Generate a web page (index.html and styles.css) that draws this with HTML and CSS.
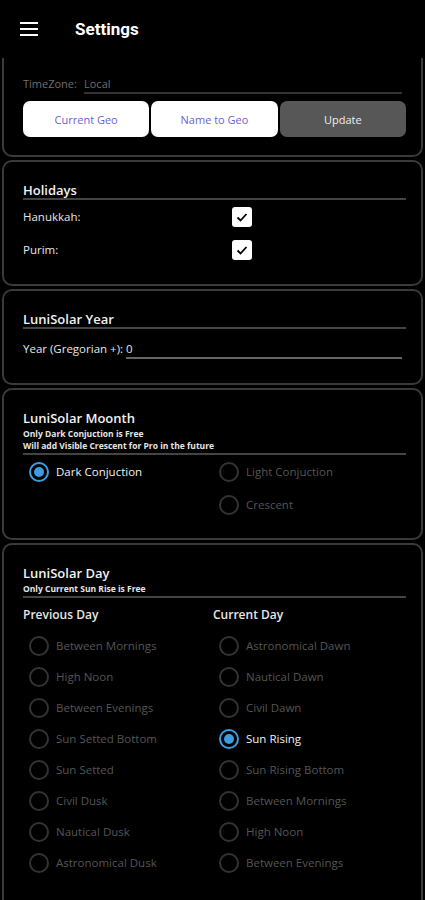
FILE: index.html
```html
<!DOCTYPE html>
<html lang="en">
<head>
    <meta charset="UTF-8" />
    <meta name="viewport" content="width=device-width, initial-scale=1.0"/>
    <title>Settings</title>
    <link rel="stylesheet" href="styles.css">
</head>
<body>
    <div class="app">
        <div class="topbar">
            <div class="burger"><span></span><span></span><span></span></div>
            <h1>Settings</h1>
        </div>

        <div class="cards">
            <!-- location card, top is scrolled under the bar -->
            <div class="card geo">
                <div class="tz-row">
                    <span class="tz-label">TimeZone:</span>
                    <span class="tz-value">Local</span>
                </div>
                <div class="geo-buttons">
                    <button class="btn light">Current Geo</button>
                    <button class="btn light">Name to Geo</button>
                    <button class="btn dark">Update</button>
                </div>
            </div>

            <div class="card holidays">
                <h2>Holidays</h2>
                <div class="check-row">
                    <span>Hanukkah:</span>
                    <span class="checkbox"><svg viewBox="0 0 20 20"><path d="M5.5 10.5l3 3 6-6.5" /></svg></span>
                </div>
                <div class="check-row">
                    <span>Purim:</span>
                    <span class="checkbox"><svg viewBox="0 0 20 20"><path d="M5.5 10.5l3 3 6-6.5" /></svg></span>
                </div>
            </div>

            <div class="card year">
                <h2>LuniSolar Year</h2>
                <div class="year-row">
                    <span>Year (Gregorian +):</span>
                    <span class="year-input">0</span>
                </div>
            </div>

            <div class="card month">
                <div class="head">
                    <h2 class="plain">LuniSolar Moonth</h2>
                    <p class="note">Only Dark Conjuction is Free</p>
                    <p class="note">Will add Visible Crescent for Pro in the future</p>
                </div>
                <div class="radio-grid">
                    <div class="radio-col">
                        <div class="radio on"><i></i>Dark Conjuction</div>
                    </div>
                    <div class="radio-col">
                        <div class="radio"><i></i>Light Conjuction</div>
                        <div class="radio"><i></i>Crescent</div>
                    </div>
                </div>
            </div>

            <div class="card day">
                <div class="head">
                    <h2 class="plain">LuniSolar Day</h2>
                    <p class="note">Only Current Sun Rise is Free</p>
                </div>
                <div class="radio-grid">
                    <div class="radio-col">
                        <div class="col-title">Previous Day</div>
                        <div class="radio"><i></i>Between Mornings</div>
                        <div class="radio"><i></i>High Noon</div>
                        <div class="radio"><i></i>Between Evenings</div>
                        <div class="radio"><i></i>Sun Setted Bottom</div>
                        <div class="radio"><i></i>Sun Setted</div>
                        <div class="radio"><i></i>Civil Dusk</div>
                        <div class="radio"><i></i>Nautical Dusk</div>
                        <div class="radio"><i></i>Astronomical Dusk</div>
                    </div>
                    <div class="radio-col">
                        <div class="col-title">Current Day</div>
                        <div class="radio"><i></i>Astronomical Dawn</div>
                        <div class="radio"><i></i>Nautical Dawn</div>
                        <div class="radio"><i></i>Civil Dawn</div>
                        <div class="radio on"><i></i>Sun Rising</div>
                        <div class="radio"><i></i>Sun Rising Bottom</div>
                        <div class="radio"><i></i>Between Mornings</div>
                        <div class="radio"><i></i>High Noon</div>
                        <div class="radio"><i></i>Between Evenings</div>
                    </div>
                </div>
            </div>
        </div>
    </div>
</body>
</html>
```

FILE: styles.css
```css
* {
    margin: 0;
    padding: 0;
    box-sizing: border-box;
}

body {
    background: #000;
    color: #e6e6e6;
    font-family: "Open Sans", "DejaVu Sans", sans-serif;
    font-size: 11.5px;
    height: 900px;
    overflow: hidden;
}

.topbar {
    height: 58px;
    display: flex;
    align-items: center;
    padding-left: 20px;
}

.burger {
    width: 18px;
    display: flex;
    flex-direction: column;
    gap: 4px;
    margin-right: 37px;
}

.burger span {
    display: block;
    height: 2px;
    background: #fff;
}

.topbar h1 {
    font-family: Roboto, "Liberation Sans", sans-serif;
    font-size: 17px;
    font-weight: 700;
    color: #fff;
}

.cards {
    display: flex;
    flex-direction: column;
    gap: 3px;
    padding: 0 2px;
}

.card {
    border: 2px solid #3a3a3a;
    border-radius: 10px;
    padding: 20px 15px 0 19px;
}

.card.geo {
    border-top: none;
    border-top-left-radius: 0;
    border-top-right-radius: 0;
    padding-top: 18px;
    height: 99px;
}

.tz-row {
    display: flex;
    align-items: baseline;
    color: #6f6f6f;
    font-size: 11px;
    margin-right: 4px;
}

.tz-label {
    width: 61px;
}

.tz-value {
    flex: 1;
    border-bottom: 2px solid #333;
    padding-bottom: 1px;
}

.geo-buttons {
    display: grid;
    grid-template-columns: repeat(3, 1fr);
    gap: 2px;
    margin-top: 7px;
}

.btn {
    height: 36px;
    border: none;
    border-radius: 7px;
    font-family: "Open Sans", sans-serif;
    font-size: 11px;
}

.btn.light {
    background: #fff;
    color: #6b5fd0;
}

.btn.dark {
    background: #575757;
    color: #eee;
}

h2 {
    font-size: 13px;
    font-weight: 600;
    color: #f2f2f2;
    line-height: 16px;
    border-bottom: 2px solid #444;
}

.card.holidays {
    height: 126px;
}

.check-row {
    display: flex;
    align-items: center;
    height: 33px;
}

.check-row span:first-child {
    width: 209px;
}

.checkbox {
    width: 20px;
    height: 20px;
    background: #fff;
    border-radius: 3px;
    display: flex;
}

.checkbox svg {
    width: 20px;
    height: 20px;
    fill: none;
    stroke: #000;
    stroke-width: 1.8;
}

.card.year {
    height: 96px;
}

.year-row {
    display: flex;
    align-items: baseline;
    margin-top: 12px;
    margin-right: 4px;
}

.year-input {
    flex: 1;
    margin-left: 3px;
    border-bottom: 2px solid #666;
    padding-bottom: 1px;
}

.head {
    border-bottom: 2px solid #444;
    padding-bottom: 1px;
}

h2.plain {
    border-bottom: none;
    line-height: 17px;
    padding-bottom: 1px;
}

.note {
    font-size: 8.5px;
    font-weight: 700;
    line-height: 12px;
    color: #e6e6e6;
}

.card.month {
    height: 152px;
}

.radio-grid {
    display: grid;
    grid-template-columns: 190px 1fr;
}

.radio {
    display: flex;
    align-items: center;
    height: 31px;
    padding-left: 6px;
    color: #555;
}

.card.month .radio {
    height: 33px;
}

.radio i {
    width: 20px;
    height: 20px;
    border-radius: 50%;
    border: 2px solid #333;
    margin-right: 7px;
    flex-shrink: 0;
    display: flex;
    align-items: center;
    justify-content: center;
}

.radio.on {
    color: #f0f0f0;
}

.radio.on i {
    border-color: #3d9be0;
}

.radio.on i::after {
    content: "";
    width: 10px;
    height: 10px;
    border-radius: 50%;
    background: #3d9be0;
}

.card.day {
    height: 370px;
}

.col-title {
    font-size: 12px;
    font-weight: 600;
    color: #e6e6e6;
    margin-top: 8px;
    margin-bottom: 6px;
    line-height: 18px;
}
```
